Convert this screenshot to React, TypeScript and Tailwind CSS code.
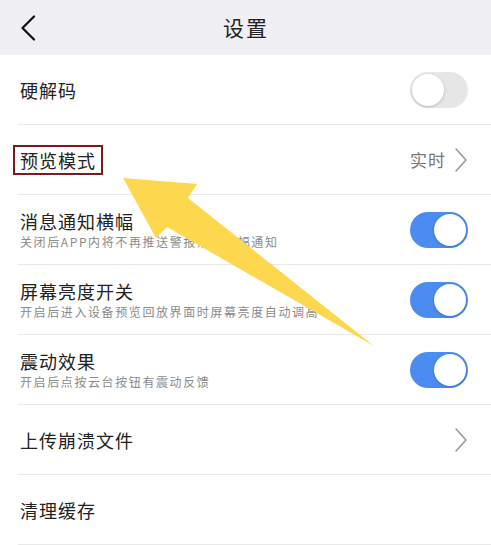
import React from 'react';

const font = { fontFamily: '"Noto Sans CJK SC", "Noto Sans", sans-serif' };

const Toggle = ({ on }: { on: boolean }) => (
    <div
        className={`w-[58px] h-[36px] rounded-full flex items-center p-[2px] ${on ? 'bg-[#4a8cf0] justify-end' : 'bg-[#e6e6e6] justify-start'}`}
    >
        <div className="w-[32px] h-[32px] rounded-full bg-white shadow-[0_1px_3px_rgba(0,0,0,0.2)]" />
    </div>
);

const Chevron = () => (
    <svg width="14" height="26" viewBox="0 0 14 26" fill="none">
        <path d="M2 2 L12 13 L2 24" stroke="#9a9a9a" strokeWidth="1.6" strokeLinecap="round" strokeLinejoin="round" />
    </svg>
);

const Row = ({ children, right }: { children: React.ReactNode; right?: React.ReactNode }) => (
    <div className="h-[70px] ml-[18px] border-b border-[#e9e9e9] flex items-center justify-between pr-[23px]">
        <div className="pl-[2px]">{children}</div>
        {right}
    </div>
);

const Title = ({ children }: { children: React.ReactNode }) => (
    <div className="text-[18px] leading-[24px] tracking-[1px] text-[#222]">{children}</div>
);

const Sub = ({ children }: { children: React.ReactNode }) => (
    <div className="text-[12px] leading-[16px] tracking-[1.6px] text-[#8a8a8a] mt-[1px]">{children}</div>
);

export default function App() {
    return (
        <div className="relative w-[491px] h-[545px] bg-white overflow-hidden" style={font}>
            {/* Header */}
            <div className="h-[55px] bg-[#efeff4] flex items-center relative">
                <div className="pl-[20px]">
                    <svg width="16" height="26" viewBox="0 0 16 26" fill="none">
                        <path d="M14 1.5 L2.5 13 L14 24.5" stroke="#111" strokeWidth="2.2" strokeLinecap="round" strokeLinejoin="round" />
                    </svg>
                </div>
                <div className="absolute inset-0 flex items-center justify-center text-[21px] tracking-[2px] text-[#222] pl-[1px]">设置</div>
            </div>

            <Row right={<Toggle on={false} />}>
                <Title>硬解码</Title>
            </Row>
            <Row
                right={
                    <div className="flex items-center gap-[8px]">
                        <span className="text-[17px] tracking-[1px] text-[#777]">实时</span>
                        <Chevron />
                    </div>
                }
            >
                <span className="inline-block -ml-[7px] border-2 border-[#7b1c1c] px-[5px] py-[1px]">
                    <Title>预览模式</Title>
                </span>
            </Row>
            <Row right={<Toggle on />}>
                <Title>消息通知横幅</Title>
                <Sub>关闭后APP内将不再推送警报消息横幅通知</Sub>
            </Row>
            <Row right={<Toggle on />}>
                <Title>屏幕亮度开关</Title>
                <Sub>开启后进入设备预览回放界面时屏幕亮度自动调高</Sub>
            </Row>
            <Row right={<Toggle on />}>
                <Title>震动效果</Title>
                <Sub>开启后点按云台按钮有震动反馈</Sub>
            </Row>
            <Row right={<Chevron />}>
                <Title>上传崩溃文件</Title>
            </Row>
            <Row>
                <Title>清理缓存</Title>
            </Row>

            {/* annotation arrow */}
            <svg className="absolute left-0 top-0 pointer-events-none" width="491" height="545" viewBox="0 0 491 545">
                <polygon
                    points="123,178 197,184 188,198 374,346 167,227 156,238"
                    fill="#fdd84f"
                />
            </svg>
        </div>
    );
}
